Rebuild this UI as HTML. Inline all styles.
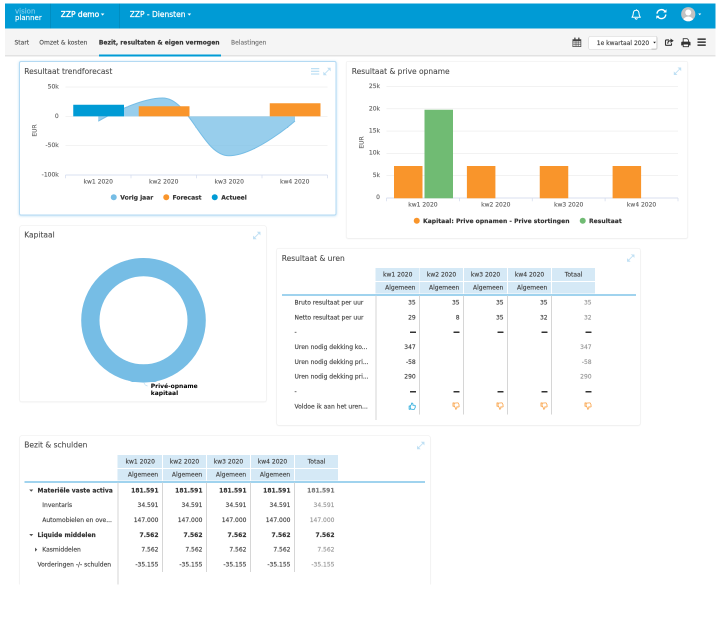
<!DOCTYPE html>
<html lang="nl"><head><meta charset="utf-8"><title>Visionplanner</title>
<style>
html,body{margin:0;padding:0;background:#fff;overflow:hidden;}
body{width:720px;height:618px;}
#root{position:absolute;left:0;top:0;width:1440px;height:1236px;transform:scale(.5);transform-origin:0 0;will-change:transform;font-family:"DejaVu Sans","Liberation Sans",sans-serif;font-size:12px;color:#444;overflow:hidden;-webkit-text-stroke:.3px;}
.abs{position:absolute;white-space:nowrap;}
#hdr{position:absolute;left:10px;top:6.5px;width:1421px;height:51px;background:#009bd5;}
#sub{position:absolute;left:10px;top:57px;width:1421px;height:52.6px;background:#f5f5f5;border-bottom:3px solid #e2e2e2;}
.sep{position:absolute;top:7px;width:1px;height:50px;background:rgba(0,0,0,.18);}
.hl{position:absolute;color:#fff;white-space:nowrap;line-height:20px;}
.nav{position:absolute;top:75px;line-height:20px;font-size:12px;color:#555;white-space:nowrap;}
.card{position:absolute;background:#fff;border:1px solid #ececec;border-radius:4px;box-shadow:0 1px 3px rgba(0,0,0,.06);box-sizing:border-box;}
.card.sel{border:2px solid #b4daf3;box-shadow:0 1px 5px rgba(120,190,235,.5);}
.title{position:absolute;font-size:15px;line-height:20px;color:#4c4c4c;white-space:nowrap;-webkit-text-stroke:.2px;}
svg{position:absolute;left:0;top:0;overflow:visible;}
svg text{font-family:"DejaVu Sans","Liberation Sans",sans-serif;stroke-width:.3px;}
.hc{position:absolute;background:#d5e9f6;font-size:12px;color:#444;box-sizing:border-box;white-space:nowrap;}
.lbl{position:absolute;font-size:12px;line-height:20px;color:#444;white-space:nowrap;overflow:hidden;text-overflow:ellipsis;}
.val{position:absolute;font-size:12px;line-height:20px;color:#444;text-align:right;white-space:nowrap;}
.b{font-weight:bold;}
.vl{position:absolute;width:2px;background:#d6d6d6;}
</style></head>
<body><div id="root">
<div id="hdr"></div>
<div class="sep" style="left:101px"></div><div class="sep" style="left:239px"></div>
<div class="hl" style="left:30px;top:16px;font-size:14px;line-height:13.4px;"><span style="color:#7fcdee">vision</span><br>planner</div>
<div class="hl" style="left:121.5px;top:19px;font-size:15px;-webkit-text-stroke:.7px;">ZZP demo</div>
<div class="hl" style="left:259.5px;top:19px;font-size:15px;-webkit-text-stroke:.45px;">ZZP - Diensten</div>
<svg width="1" height="1"><path d="M201.5 27.0 h7.4 l-3.7 4.2 z" fill="#fff"/></svg>
<svg width="1" height="1"><path d="M375.0 27.0 h7.4 l-3.7 4.2 z" fill="#fff"/></svg>
<svg width="1" height="1"><path d="M1396.5 27.0 h6.0 l-3.0 3.5 z" fill="#fff"/></svg>
<svg width="1" height="1"><g transform="translate(1272.3,28.6)" fill="none" stroke="#fff" stroke-width="2" stroke-linejoin="round" stroke-linecap="round">
<path d="M0 -9.5 v1.5 M-8.5 6 C-5.5 3 -6 -1 -5.5 -3 C-5 -6.5 -2.5 -8 0 -8 C2.5 -8 5 -6.5 5.5 -3 C6 -1 5.5 3 8.5 6 Z"/>
<path d="M-2 8.5 a2.2 2.2 0 0 0 4 0"/></g></svg>
<svg width="1" height="1"><g transform="translate(1322.8,28.2)" fill="none" stroke="#fff" stroke-width="2.8">
<path d="M-8.8 -0.8 A8.8 8.8 0 0 1 7.2 -5.1"/><path d="M8.8 0.8 A8.8 8.8 0 0 1 -7.2 5.1"/></g>
<g transform="translate(1322.8,28.2)" fill="#fff"><path d="M10.2 -9.6 v6.4 h-6.4 z"/><path d="M-10.2 9.6 v-6.4 h6.4 z"/></g></svg>
<svg width="1" height="1"><defs><clipPath id="av"><circle cx="1376.5" cy="28.4" r="14.2"/></clipPath></defs>
<circle cx="1376.5" cy="28.4" r="14.2" fill="#c2c2c2"/><g clip-path="url(#av)" fill="#fff"><circle cx="1376.5" cy="25" r="6"/><ellipse cx="1376.5" cy="43" rx="11" ry="10"/></g></svg>
<div id="sub"></div>
<div class="nav" style="left:29px;">Start</div>
<div class="nav" style="left:78.5px;">Omzet &amp; kosten</div>
<div class="nav b" style="left:197.7px;color:#333;">Bezit, resultaten &amp; eigen vermogen</div>
<div class="nav" style="left:462px;color:#777;">Belastingen</div>
<div class="abs" style="left:197.5px;top:108.6px;width:244px;height:4px;background:#009bd5"></div>
<svg width="1" height="1"><g transform="translate(1145,75)" fill="#444">
<path d="M0 3.5 h17.5 v15.5 h-17.5 z M1.5 7.5 v10 h14.5 v-10 z" fill-rule="evenodd"/>
<rect x="3.5" y="0" width="2.6" height="5.5" rx="1"/><rect x="11.4" y="0" width="2.6" height="5.5" rx="1"/>
<path d="M5.2 7.5 v10 M8.8 7.5 v10 M12.4 7.5 v10 M1.5 10.8 h14.5 M1.5 14.2 h14.5" stroke="#444" stroke-width="1" fill="none"/></g></svg>
<div class="abs" style="left:1176.5px;top:72px;width:138.5px;height:27.5px;box-sizing:border-box;border:1px solid #d0d0d0;border-radius:4px;background:#fff;"></div>
<div class="abs" style="left:1193.5px;top:75.5px;line-height:20px;font-size:12px;color:#444;">1e kwartaal 2020</div>
<div class="abs" style="left:1303px;top:73px;width:11px;height:25.5px;box-sizing:border-box;border-right:1px solid #c6c6c6;border-bottom:2px solid #cdcdcd;border-radius:0 0 3px 0;"></div>
<svg width="1" height="1"><path d="M1306.4 83.4 h5.4 l-2.7 3.6 z" fill="#222"/></svg>
<svg width="1" height="1"><g transform="translate(1330,77.4)" fill="none" stroke="#333" stroke-width="2.2" stroke-linejoin="round">
<path d="M8 2.5 h-5.2 a1.8 1.8 0 0 0 -1.8 1.8 v7.2 a1.8 1.8 0 0 0 1.8 1.8 h8.4 a1.8 1.8 0 0 0 1.8 -1.8 v-2.5"/>
<path d="M5.5 10 C5.5 5.5 8 4 11.5 4" />
</g><g transform="translate(1330,77.4)" fill="#333"><path d="M11 -0.5 l6.5 4.5 l-6.5 4.5 z"/></g></svg>
<svg width="1" height="1"><g transform="translate(1362.4,76.6)">
<path d="M4 7.5 v-6.7 h8 l2.6 2.6 v4.1" fill="#fff" stroke="#333" stroke-width="1.7"/>
<path d="M1.9 6.7 h14.8 a1.9 1.9 0 0 1 1.9 1.9 v5.6 h-18.6 v-5.6 a1.9 1.9 0 0 1 1.9 -1.9 z" fill="#333"/>
<path d="M4 11.6 h10.6 v5.2 h-10.6 z" fill="#fff" stroke="#333" stroke-width="1.7"/></g></svg>
<svg width="1" height="1"><g fill="#333"><rect x="1395" y="76.8" width="16.5" height="3"/><rect x="1395" y="82.8" width="16.5" height="3"/><rect x="1395" y="88.8" width="16.5" height="3"/></g></svg>
<div class="card sel" style="left:38px;top:121.5px;width:635px;height:309.5px;"></div>
<div class="title" style="left:48.5px;top:132.5px;">Resultaat trendforecast</div>
<svg width="1" height="1"><g fill="#bfe0f4"><rect x="622.0" y="136.0" width="16.5" height="2.5"/><rect x="622.0" y="141.4" width="16.5" height="2.5"/><rect x="622.0" y="146.8" width="16.5" height="2.5"/></g></svg>
<svg width="1" height="1"><g transform="translate(646.0,135.0)" fill="#bfe0f4"><path d="M2.2 13.8 L13.8 2.2" stroke="#bfe0f4" stroke-width="1.7" fill="none"/><path d="M8.2 0.6 h7.2 v7.2 z"/><path d="M0.6 8.2 v7.2 h7.2 z"/></g></svg>
<svg width="1440" height="1236"><path d="M131 174.0 H655" stroke="#e6e6e6" stroke-width="1"/><path d="M131 232.7 H655" stroke="#e6e6e6" stroke-width="1"/><path d="M131 291.3 H655" stroke="#e6e6e6" stroke-width="1"/><path d="M196.5 242.5 C196.5 242.5 273.9 196.0 325.5 196.0 C378.5 196.0 405.0 311.5 458.0 311.5 C510.8 311.5 590.0 242.0 590.0 242.0 L590.0 232.7 L196.5 232.7 Z" fill="#76bde5" fill-opacity=".75"/><path d="M196.5 242.5 C196.5 242.5 273.9 196.0 325.5 196.0 C378.5 196.0 405.0 311.5 458.0 311.5 C510.8 311.5 590.0 242.0 590.0 242.0" fill="none" stroke="#76bde5" stroke-width="2"/><rect x="277.5" y="212.5" width="101.5" height="20.2" fill="#f9952b"/><rect x="539.5" y="206.5" width="101.5" height="26.2" fill="#f9952b"/><rect x="146.5" y="209.5" width="101.5" height="23.2" fill="#009bd5"/><path d="M131 350 H655" stroke="#ccd6eb" stroke-width="1.5"/><path d="M131.0 350 v6.5" stroke="#d4dcee" stroke-width="1.5"/><path d="M262.0 350 v6.5" stroke="#d4dcee" stroke-width="1.5"/><path d="M393.0 350 v6.5" stroke="#d4dcee" stroke-width="1.5"/><path d="M524.0 350 v6.5" stroke="#d4dcee" stroke-width="1.5"/><path d="M655.0 350 v6.5" stroke="#d4dcee" stroke-width="1.5"/><text x="117.5" y="176.8" text-anchor="end" font-size="12" fill="#666" stroke="#666" stroke-width=".3">50k</text><text x="117.5" y="235.5" text-anchor="end" font-size="12" fill="#666" stroke="#666" stroke-width=".3">0</text><text x="117.5" y="294.1" text-anchor="end" font-size="12" fill="#666" stroke="#666" stroke-width=".3">-50k</text><text x="117.5" y="352.8" text-anchor="end" font-size="12" fill="#666" stroke="#666" stroke-width=".3">-100k</text><text x="196.5" y="367" text-anchor="middle" font-size="12" fill="#666" stroke="#666" stroke-width=".3">kw1 2020</text><text x="327.5" y="367" text-anchor="middle" font-size="12" fill="#666" stroke="#666" stroke-width=".3">kw2 2020</text><text x="458.5" y="367" text-anchor="middle" font-size="12" fill="#666" stroke="#666" stroke-width=".3">kw3 2020</text><text x="589.5" y="367" text-anchor="middle" font-size="12" fill="#666" stroke="#666" stroke-width=".3">kw4 2020</text><text transform="translate(73,261) rotate(-90)" text-anchor="middle" font-size="12" fill="#666" stroke="#666" stroke-width=".3">EUR</text><circle cx="227.5" cy="394.5" r="6" fill="#76bde5"/><text x="240.5" y="399" font-size="12" font-weight="bold" fill="#333" stroke="#333" stroke-width=".25">Vorig jaar</text><circle cx="332.5" cy="394.5" r="6" fill="#f9952b"/><text x="345.0" y="399" font-size="12" font-weight="bold" fill="#333" stroke="#333" stroke-width=".25">Forecast</text><circle cx="429.5" cy="394.5" r="6" fill="#009bd5"/><text x="442.5" y="399" font-size="12" font-weight="bold" fill="#333" stroke="#333" stroke-width=".25">Actueel</text></svg>
<div class="card" style="left:692px;top:122px;width:683.5px;height:355px;"></div>
<div class="title" style="left:703.5px;top:133px;">Resultaat &amp; prive opname</div>
<svg width="1" height="1"><g transform="translate(1347.0,134.5)" fill="#bfe0f4"><path d="M2.2 13.8 L13.8 2.2" stroke="#bfe0f4" stroke-width="1.7" fill="none"/><path d="M8.2 0.6 h7.2 v7.2 z"/><path d="M0.6 8.2 v7.2 h7.2 z"/></g></svg>
<svg width="1440" height="1236"><path d="M773 351.1 H1356" stroke="#e6e6e6" stroke-width="1"/><path d="M773 306.6 H1356" stroke="#e6e6e6" stroke-width="1"/><path d="M773 262.1 H1356" stroke="#e6e6e6" stroke-width="1"/><path d="M773 217.7 H1356" stroke="#e6e6e6" stroke-width="1"/><path d="M773 173.2 H1356" stroke="#e6e6e6" stroke-width="1"/><path d="M773 396 H1356" stroke="#ccd6eb" stroke-width="1.5"/><path d="M773.0 396 v6.5" stroke="#d4dcee" stroke-width="1.5"/><path d="M918.8 396 v6.5" stroke="#d4dcee" stroke-width="1.5"/><path d="M1064.5 396 v6.5" stroke="#d4dcee" stroke-width="1.5"/><path d="M1210.2 396 v6.5" stroke="#d4dcee" stroke-width="1.5"/><path d="M1356.0 396 v6.5" stroke="#d4dcee" stroke-width="1.5"/><rect x="788.0" y="332" width="57" height="64.6" fill="#f9952b"/><rect x="933.8" y="332" width="57" height="64.6" fill="#f9952b"/><rect x="1079.5" y="332" width="57" height="64.6" fill="#f9952b"/><rect x="1225.2" y="332" width="57" height="64.6" fill="#f9952b"/><rect x="849" y="219.5" width="57" height="177.1" fill="#70bb73"/><text x="760" y="398.3" text-anchor="end" font-size="12" fill="#666" stroke="#666" stroke-width=".3">0</text><text x="760" y="353.9" text-anchor="end" font-size="12" fill="#666" stroke="#666" stroke-width=".3">5k</text><text x="760" y="309.4" text-anchor="end" font-size="12" fill="#666" stroke="#666" stroke-width=".3">10k</text><text x="760" y="264.9" text-anchor="end" font-size="12" fill="#666" stroke="#666" stroke-width=".3">15k</text><text x="760" y="220.5" text-anchor="end" font-size="12" fill="#666" stroke="#666" stroke-width=".3">20k</text><text x="760" y="176.1" text-anchor="end" font-size="12" fill="#666" stroke="#666" stroke-width=".3">25k</text><text x="845.9" y="413" text-anchor="middle" font-size="12" fill="#666" stroke="#666" stroke-width=".3">kw1 2020</text><text x="991.6" y="413" text-anchor="middle" font-size="12" fill="#666" stroke="#666" stroke-width=".3">kw2 2020</text><text x="1137.4" y="413" text-anchor="middle" font-size="12" fill="#666" stroke="#666" stroke-width=".3">kw3 2020</text><text x="1283.1" y="413" text-anchor="middle" font-size="12" fill="#666" stroke="#666" stroke-width=".3">kw4 2020</text><text transform="translate(727,285) rotate(-90)" text-anchor="middle" font-size="12" fill="#666" stroke="#666" stroke-width=".3">EUR</text><circle cx="833.5" cy="441.5" r="6" fill="#f9952b"/><text x="846.0" y="446" font-size="12" font-weight="bold" letter-spacing=".08" fill="#333" stroke="#333" stroke-width=".25">Kapitaal: Prive opnamen - Prive stortingen</text><circle cx="1165.5" cy="441.5" r="6" fill="#70bb73"/><text x="1178.0" y="446" font-size="12" font-weight="bold" letter-spacing=".08" fill="#333" stroke="#333" stroke-width=".25">Resultaat</text></svg>
<div class="card" style="left:38.5px;top:451px;width:494.5px;height:352.5px;"></div>
<div class="title" style="left:48.5px;top:459.5px;">Kapitaal</div>
<svg width="1" height="1"><g transform="translate(505.5,463.0)" fill="#bfe0f4"><path d="M2.2 13.8 L13.8 2.2" stroke="#bfe0f4" stroke-width="1.7" fill="none"/><path d="M8.2 0.6 h7.2 v7.2 z"/><path d="M0.6 8.2 v7.2 h7.2 z"/></g></svg>
<svg width="1440" height="1236"><circle cx="287" cy="640.6" r="106.3" fill="none" stroke="#76bde5" stroke-width="36.6"/><path d="M288 766 C290 770 292 771.5 295 772" stroke="#76bde5" stroke-width="1" stroke-opacity=".8" fill="none"/><text x="301.5" y="776.3" font-size="12" font-weight="bold" fill="#000" stroke="#fff" stroke-width="2" stroke-linejoin="round" paint-order="stroke">Privé-opname</text><text x="301.5" y="789.7" font-size="12" font-weight="bold" fill="#000" stroke="#fff" stroke-width="2" stroke-linejoin="round" paint-order="stroke">kapitaal</text></svg>
<div class="card" style="left:553px;top:496px;width:727.5px;height:354.5px;"></div>
<div class="title" style="left:563.5px;top:506.5px;">Resultaat &amp; uren</div>
<svg width="1" height="1"><g transform="translate(1253.5,508.0)" fill="#bfe0f4"><path d="M2.2 13.8 L13.8 2.2" stroke="#bfe0f4" stroke-width="1.7" fill="none"/><path d="M8.2 0.6 h7.2 v7.2 z"/><path d="M0.6 8.2 v7.2 h7.2 z"/></g></svg>
<div class="hc" style="left:750.5px;top:536.3px;width:88.0px;height:25.7px;line-height:27.2px;text-align:center;padding-left:2px;">kw1 2020</div><div class="hc" style="left:750.5px;top:563.5px;width:88.0px;height:23.0px;line-height:23.5px;text-align:right;padding-right:7.6px;">Algemeen</div><div class="hc" style="left:840.0px;top:536.3px;width:86.2px;height:25.7px;line-height:27.2px;text-align:center;">kw2 2020</div><div class="hc" style="left:840.0px;top:563.5px;width:86.2px;height:23.0px;line-height:23.5px;text-align:right;padding-right:7.6px;">Algemeen</div><div class="hc" style="left:928.0px;top:536.3px;width:86.2px;height:25.7px;line-height:27.2px;text-align:center;">kw3 2020</div><div class="hc" style="left:928.0px;top:563.5px;width:86.2px;height:23.0px;line-height:23.5px;text-align:right;padding-right:7.6px;">Algemeen</div><div class="hc" style="left:1016.0px;top:536.3px;width:86.2px;height:25.7px;line-height:27.2px;text-align:center;">kw4 2020</div><div class="hc" style="left:1016.0px;top:563.5px;width:86.2px;height:23.0px;line-height:23.5px;text-align:right;padding-right:7.6px;">Algemeen</div><div class="hc" style="left:1104.0px;top:536.3px;width:86.2px;height:25.7px;line-height:27.2px;text-align:center;">Totaal</div><div class="hc" style="left:1104.0px;top:563.5px;width:86.2px;height:23.0px;line-height:23.5px;text-align:right;padding-right:7.6px;"></div><div class="abs" style="left:563.5px;top:587.7px;width:707.5px;height:4px;background:#a0d3ee;"></div><div class="vl" style="left:750.5px;top:590.5px;height:249.5px;"></div><div class="vl" style="left:838.0px;top:590.5px;height:238.5px;"></div><div class="vl" style="left:926.0px;top:590.5px;height:238.5px;"></div><div class="vl" style="left:1014.0px;top:590.5px;height:238.5px;"></div><div class="vl" style="left:1102.0px;top:590.5px;height:238.5px;"></div><div class="lbl" style="left:589px;top:595.0px;width:152px;">Bruto resultaat per uur</div><div class="val" style="left:761.5px;top:595.0px;width:70px;color:#444">35</div><div class="val" style="left:849.2px;top:595.0px;width:70px;color:#444">35</div><div class="val" style="left:937.2px;top:595.0px;width:70px;color:#444">35</div><div class="val" style="left:1025.2px;top:595.0px;width:70px;color:#444">35</div><div class="val" style="left:1113.2px;top:595.0px;width:70px;color:#999">35</div><div class="lbl" style="left:589px;top:624.6px;width:152px;">Netto resultaat per uur</div><div class="val" style="left:761.5px;top:624.6px;width:70px;color:#444">29</div><div class="val" style="left:849.2px;top:624.6px;width:70px;color:#444">8</div><div class="val" style="left:937.2px;top:624.6px;width:70px;color:#444">35</div><div class="val" style="left:1025.2px;top:624.6px;width:70px;color:#444">32</div><div class="val" style="left:1113.2px;top:624.6px;width:70px;color:#999">32</div><div class="lbl" style="left:589px;top:654.3px;width:152px;">-</div><div class="abs" style="left:819.5px;top:663.1px;width:12px;height:3.4px;background:#333;border-radius:.5px"></div><div class="abs" style="left:907.2px;top:663.1px;width:12px;height:3.4px;background:#333;border-radius:.5px"></div><div class="abs" style="left:995.2px;top:663.1px;width:12px;height:3.4px;background:#333;border-radius:.5px"></div><div class="abs" style="left:1083.2px;top:663.1px;width:12px;height:3.4px;background:#333;border-radius:.5px"></div><div class="abs" style="left:1171.2px;top:663.1px;width:12px;height:3.4px;background:#333;border-radius:.5px"></div><div class="lbl" style="left:589px;top:684.0px;width:152px;">Uren nodig dekking ko...</div><div class="val" style="left:761.5px;top:684.0px;width:70px;color:#444">347</div><div class="val" style="left:1113.2px;top:684.0px;width:70px;color:#999">347</div><div class="lbl" style="left:589px;top:713.6px;width:152px;">Uren nodig dekking pri...</div><div class="val" style="left:761.5px;top:713.6px;width:70px;color:#444">-58</div><div class="val" style="left:1113.2px;top:713.6px;width:70px;color:#999">-58</div><div class="lbl" style="left:589px;top:743.2px;width:152px;">Uren nodig dekking pri...</div><div class="val" style="left:761.5px;top:743.2px;width:70px;color:#444">290</div><div class="val" style="left:1113.2px;top:743.2px;width:70px;color:#999">290</div><div class="lbl" style="left:589px;top:772.9px;width:152px;">-</div><div class="abs" style="left:819.5px;top:781.7px;width:12px;height:3.4px;background:#333;border-radius:.5px"></div><div class="abs" style="left:907.2px;top:781.7px;width:12px;height:3.4px;background:#333;border-radius:.5px"></div><div class="abs" style="left:995.2px;top:781.7px;width:12px;height:3.4px;background:#333;border-radius:.5px"></div><div class="abs" style="left:1083.2px;top:781.7px;width:12px;height:3.4px;background:#333;border-radius:.5px"></div><div class="abs" style="left:1171.2px;top:781.7px;width:12px;height:3.4px;background:#333;border-radius:.5px"></div><div class="lbl" style="left:589px;top:802.5px;width:152px;">Voldoe ik aan het uren...</div><svg width="1" height="1"><g transform="translate(824.3,812.2) scale(.9,.97)" fill="none" stroke="#009bd5" stroke-width="1.6" stroke-linejoin="round" stroke-opacity=".9"><path d="M-6.8 -0.3 h2.6 v6.8 h-2.6 z"/><path d="M-4.2 0 C-2 -1.5 -1.3 -4 -0.9 -6.4 C1.5 -6.8 2.6 -4.4 1.4 -1.7 H5.4 C7.6 -1.7 7.6 0.8 6.3 1.3 C7.3 2.4 6.9 3.8 5.8 4.2 C6.3 5.6 5.2 6.7 3.6 6.7 C0.5 6.7 -2 6.5 -4.2 5.8"/></g></svg><svg width="1" height="1"><g transform="translate(912.0,812.2) scale(.9,.97) scale(1,-1)" fill="none" stroke="#f9952b" stroke-width="1.6" stroke-linejoin="round" stroke-opacity=".9"><path d="M-6.8 -0.3 h2.6 v6.8 h-2.6 z"/><path d="M-4.2 0 C-2 -1.5 -1.3 -4 -0.9 -6.4 C1.5 -6.8 2.6 -4.4 1.4 -1.7 H5.4 C7.6 -1.7 7.6 0.8 6.3 1.3 C7.3 2.4 6.9 3.8 5.8 4.2 C6.3 5.6 5.2 6.7 3.6 6.7 C0.5 6.7 -2 6.5 -4.2 5.8"/></g></svg><svg width="1" height="1"><g transform="translate(1000.0,812.2) scale(.9,.97) scale(1,-1)" fill="none" stroke="#f9952b" stroke-width="1.6" stroke-linejoin="round" stroke-opacity=".9"><path d="M-6.8 -0.3 h2.6 v6.8 h-2.6 z"/><path d="M-4.2 0 C-2 -1.5 -1.3 -4 -0.9 -6.4 C1.5 -6.8 2.6 -4.4 1.4 -1.7 H5.4 C7.6 -1.7 7.6 0.8 6.3 1.3 C7.3 2.4 6.9 3.8 5.8 4.2 C6.3 5.6 5.2 6.7 3.6 6.7 C0.5 6.7 -2 6.5 -4.2 5.8"/></g></svg><svg width="1" height="1"><g transform="translate(1088.0,812.2) scale(.9,.97) scale(1,-1)" fill="none" stroke="#f9952b" stroke-width="1.6" stroke-linejoin="round" stroke-opacity=".9"><path d="M-6.8 -0.3 h2.6 v6.8 h-2.6 z"/><path d="M-4.2 0 C-2 -1.5 -1.3 -4 -0.9 -6.4 C1.5 -6.8 2.6 -4.4 1.4 -1.7 H5.4 C7.6 -1.7 7.6 0.8 6.3 1.3 C7.3 2.4 6.9 3.8 5.8 4.2 C6.3 5.6 5.2 6.7 3.6 6.7 C0.5 6.7 -2 6.5 -4.2 5.8"/></g></svg><svg width="1" height="1"><g transform="translate(1176.0,812.2) scale(.9,.97) scale(1,-1)" fill="none" stroke="#f9952b" stroke-width="1.6" stroke-linejoin="round" stroke-opacity=".9"><path d="M-6.8 -0.3 h2.6 v6.8 h-2.6 z"/><path d="M-4.2 0 C-2 -1.5 -1.3 -4 -0.9 -6.4 C1.5 -6.8 2.6 -4.4 1.4 -1.7 H5.4 C7.6 -1.7 7.6 0.8 6.3 1.3 C7.3 2.4 6.9 3.8 5.8 4.2 C6.3 5.6 5.2 6.7 3.6 6.7 C0.5 6.7 -2 6.5 -4.2 5.8"/></g></svg>
<div class="abs" style="left:0;top:860px;width:900px;height:308.5px;overflow:hidden;white-space:normal;"><div style="position:absolute;left:0;top:-860px;">
<div class="card" style="left:38.5px;top:871px;width:822px;height:340px;"></div>
<div class="title" style="left:48.5px;top:879.5px;">Bezit &amp; schulden</div>
<svg width="1" height="1"><g transform="translate(833.5,883.0)" fill="#bfe0f4"><path d="M2.2 13.8 L13.8 2.2" stroke="#bfe0f4" stroke-width="1.7" fill="none"/><path d="M8.2 0.6 h7.2 v7.2 z"/><path d="M0.6 8.2 v7.2 h7.2 z"/></g></svg>
<div class="hc" style="left:235.0px;top:910.3px;width:89.0px;height:25.7px;line-height:27.2px;text-align:center;padding-left:2px;">kw1 2020</div><div class="hc" style="left:235.0px;top:937.5px;width:89.0px;height:23.0px;line-height:23.5px;text-align:right;padding-right:7.6px;">Algemeen</div><div class="hc" style="left:326.0px;top:910.3px;width:86.0px;height:25.7px;line-height:27.2px;text-align:center;">kw2 2020</div><div class="hc" style="left:326.0px;top:937.5px;width:86.0px;height:23.0px;line-height:23.5px;text-align:right;padding-right:7.6px;">Algemeen</div><div class="hc" style="left:414.0px;top:910.3px;width:86.0px;height:25.7px;line-height:27.2px;text-align:center;">kw3 2020</div><div class="hc" style="left:414.0px;top:937.5px;width:86.0px;height:23.0px;line-height:23.5px;text-align:right;padding-right:7.6px;">Algemeen</div><div class="hc" style="left:502.0px;top:910.3px;width:86.0px;height:25.7px;line-height:27.2px;text-align:center;">kw4 2020</div><div class="hc" style="left:502.0px;top:937.5px;width:86.0px;height:23.0px;line-height:23.5px;text-align:right;padding-right:7.6px;">Algemeen</div><div class="hc" style="left:590.0px;top:910.3px;width:86.0px;height:25.7px;line-height:27.2px;text-align:center;">Totaal</div><div class="hc" style="left:590.0px;top:937.5px;width:86.0px;height:23.0px;line-height:23.5px;text-align:right;padding-right:7.6px;"></div><div class="abs" style="left:49.0px;top:961.7px;width:801.0px;height:4px;background:#a0d3ee;"></div><div class="vl" style="left:235.0px;top:964.5px;height:235.5px;"></div><div class="vl" style="left:324.0px;top:964.5px;height:179.0px;"></div><div class="vl" style="left:412.0px;top:964.5px;height:179.0px;"></div><div class="vl" style="left:500.0px;top:964.5px;height:179.0px;"></div><div class="vl" style="left:588.0px;top:964.5px;height:179.0px;"></div><svg width="1" height="1"><path d="M58.5 979.0 h8 l-4 4.5 z" fill="#555"/></svg><div class="lbl b" style="left:75.0px;top:970.5px;width:154.0px;color:#333;">Materiële vaste activa</div><div class="val b" style="left:237.0px;top:970.5px;width:80px;color:#333">181.591</div><div class="val b" style="left:325.0px;top:970.5px;width:80px;color:#333">181.591</div><div class="val b" style="left:413.0px;top:970.5px;width:80px;color:#333">181.591</div><div class="val b" style="left:501.0px;top:970.5px;width:80px;color:#333">181.591</div><div class="val b" style="left:589.0px;top:970.5px;width:80px;color:#777">181.591</div><div class="lbl" style="left:84.5px;top:1000.2px;width:144.5px;">Inventaris</div><div class="val" style="left:237.0px;top:1000.2px;width:80px;color:#444">34.591</div><div class="val" style="left:325.0px;top:1000.2px;width:80px;color:#444">34.591</div><div class="val" style="left:413.0px;top:1000.2px;width:80px;color:#444">34.591</div><div class="val" style="left:501.0px;top:1000.2px;width:80px;color:#444">34.591</div><div class="val" style="left:589.0px;top:1000.2px;width:80px;color:#999">34.591</div><div class="lbl" style="left:84.5px;top:1029.9px;width:144.5px;">Automobielen en ove...</div><div class="val" style="left:237.0px;top:1029.9px;width:80px;color:#444">147.000</div><div class="val" style="left:325.0px;top:1029.9px;width:80px;color:#444">147.000</div><div class="val" style="left:413.0px;top:1029.9px;width:80px;color:#444">147.000</div><div class="val" style="left:501.0px;top:1029.9px;width:80px;color:#444">147.000</div><div class="val" style="left:589.0px;top:1029.9px;width:80px;color:#999">147.000</div><svg width="1" height="1"><path d="M58.5 1068.1 h8 l-4 4.5 z" fill="#555"/></svg><div class="lbl b" style="left:75.0px;top:1059.6px;width:154.0px;color:#333;">Liquide middelen</div><div class="val b" style="left:237.0px;top:1059.6px;width:80px;color:#333">7.562</div><div class="val b" style="left:325.0px;top:1059.6px;width:80px;color:#333">7.562</div><div class="val b" style="left:413.0px;top:1059.6px;width:80px;color:#333">7.562</div><div class="val b" style="left:501.0px;top:1059.6px;width:80px;color:#333">7.562</div><div class="val b" style="left:589.0px;top:1059.6px;width:80px;color:#333">7.562</div><svg width="1" height="1"><path d="M70 1095.3 v8 l4.5 -4 z" fill="#555"/></svg><div class="lbl" style="left:84.5px;top:1089.3px;width:144.5px;">Kasmiddelen</div><div class="val" style="left:237.0px;top:1089.3px;width:80px;color:#444">7.562</div><div class="val" style="left:325.0px;top:1089.3px;width:80px;color:#444">7.562</div><div class="val" style="left:413.0px;top:1089.3px;width:80px;color:#444">7.562</div><div class="val" style="left:501.0px;top:1089.3px;width:80px;color:#444">7.562</div><div class="val" style="left:589.0px;top:1089.3px;width:80px;color:#999">7.562</div><div class="lbl" style="left:75.0px;top:1119.0px;width:154.0px;">Vorderingen -/- schulden</div><div class="val" style="left:237.0px;top:1119.0px;width:80px;color:#444">-35.155</div><div class="val" style="left:325.0px;top:1119.0px;width:80px;color:#444">-35.155</div><div class="val" style="left:413.0px;top:1119.0px;width:80px;color:#444">-35.155</div><div class="val" style="left:501.0px;top:1119.0px;width:80px;color:#444">-35.155</div><div class="val" style="left:589.0px;top:1119.0px;width:80px;color:#999">-35.155</div>
</div></div>
</div></body></html>
